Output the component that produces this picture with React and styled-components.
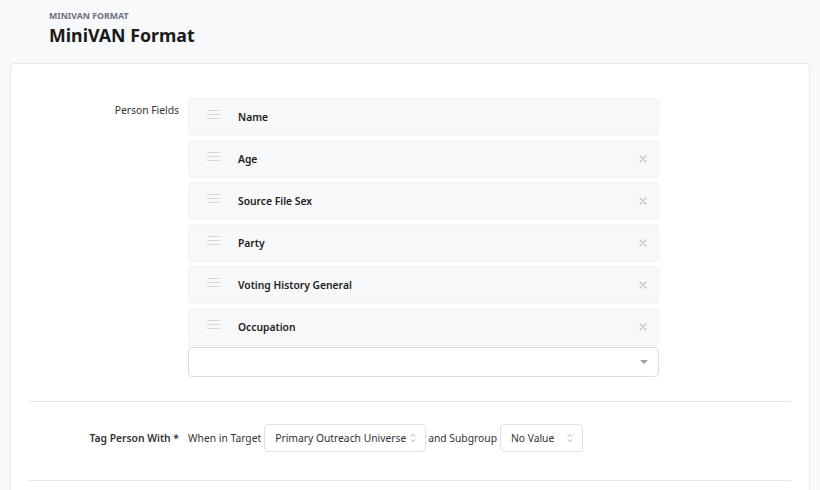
import React from 'react';
import styled, { createGlobalStyle } from 'styled-components';

const GlobalStyle = createGlobalStyle`
  body {
    margin: 0;
    background: #f8f9fa;
    font-family: "Noto Sans", "Open Sans", sans-serif;
    color: #222;
  }
`;

const Header = styled.header`
  padding: 10px 0 0 49px;
  height: 63px;
  box-sizing: border-box;
`;

const Eyebrow = styled.div`
  font-size: 8.8px;
  font-weight: 700;
  color: #6b7280;
  line-height: 12px;
`;

const Title = styled.h1`
  margin: 0;
  font-size: 17.8px;
  font-weight: 700;
  color: #1a1a1a;
  line-height: 26px;
`;

const Card = styled.section`
  margin: 0 10px;
  background: #fff;
  border: 1px solid #e6e8eb;
  border-bottom: none;
  border-radius: 4px 4px 0 0;
  padding: 34px 18px 0;
  min-height: 427px;
  box-sizing: border-box;
`;

const FormRow = styled.div`
  display: grid;
  grid-template-columns: 150px 1fr;
  column-gap: 9px;
  align-items: ${({ center }) => (center ? 'center' : 'start')};
  padding: ${({ center }) => (center ? '22px 0 28px' : '0 0 24px')};
  border-bottom: 1px solid #e3e5e8;
`;

const Label = styled.label`
  text-align: right;
  font-size: 10.3px;
  font-weight: ${({ bold }) => (bold ? 600 : 400)};
  color: #333;
  padding-top: ${({ bold }) => (bold ? '0' : '5px')};
`;

const FieldList = styled.div`
  width: 471px;
  display: flex;
  flex-direction: column;
  gap: 4px;
`;

const FieldItem = styled.div`
  height: 38px;
  box-sizing: border-box;
  background: #f7f8fa;
  border: 1px solid #f1f2f4;
  border-radius: 4px;
  display: flex;
  align-items: center;
  padding: 0 11px 0 18px;
`;

const Handle = styled.span`
  width: 13px;
  height: 7px;
  margin-top: -5px;
  border-top: 1px solid #d6d8dc;
  border-bottom: 1px solid #d6d8dc;
  position: relative;
  flex-shrink: 0;

  &::after {
    content: '';
    position: absolute;
    left: 0;
    right: 0;
    top: 3px;
    border-top: 1px solid #d6d8dc;
  }
`;

const FieldName = styled.span`
  margin-left: 18px;
  flex-grow: 1;
  font-size: 10.3px;
  font-weight: 600;
  color: #222;
`;

const Remove = styled.span`
  width: 8px;
  display: flex;
  justify-content: center;
`;

const AddSelect = styled.div`
  margin-top: -3px;
  height: 30px;
  box-sizing: border-box;
  background: #fff;
  border: 1px solid #d9dce0;
  border-radius: 4px;
  display: flex;
  align-items: center;
  justify-content: flex-end;
  padding-right: 10px;
`;

const Caret = styled.span`
  width: 0;
  height: 0;
  border-left: 4px solid transparent;
  border-right: 4px solid transparent;
  border-top: 4px solid #9a9da2;
`;

const Inline = styled.div`
  display: flex;
  align-items: center;
  gap: 2px;
  font-size: 10.3px;
  color: #333;
  white-space: nowrap;
`;

const Select = styled.div`
  height: 28px;
  width: ${({ w }) => w}px;
  box-sizing: border-box;
  border: 1px solid #dfe1e5;
  border-radius: 4px;
  display: flex;
  align-items: center;
  justify-content: space-between;
  padding: 0 9px 0 10px;
  font-size: 10.3px;
  color: #333;
  background: #fff;
`;

const Text = styled.span`
  margin-right: 1px;
`;

const Cross = () => (
  <svg width="8" height="8" viewBox="0 0 8 8">
    <path d="M1 1L7 7M7 1L1 7" stroke="#c2c4c8" strokeWidth="1.4" strokeLinecap="round" />
  </svg>
);

const Updown = () => (
  <svg width="6" height="10" viewBox="0 0 6 10">
    <path d="M1 3.5L3 1.5L5 3.5M1 6.5L3 8.5L5 6.5" fill="none" stroke="#9a9da2" strokeWidth="0.9" />
  </svg>
);

const fields = ['Name', 'Age', 'Source File Sex', 'Party', 'Voting History General', 'Occupation'];

export default function App() {
  return (
    <>
      <GlobalStyle />
      <Header>
        <Eyebrow>MINIVAN FORMAT</Eyebrow>
        <Title>MiniVAN Format</Title>
      </Header>
      <Card>
        <FormRow>
          <Label>Person Fields</Label>
          <FieldList>
            {fields.map((f, i) => (
              <FieldItem key={f}>
                <Handle />
                <FieldName>{f}</FieldName>
                <Remove>{i > 0 && <Cross />}</Remove>
              </FieldItem>
            ))}
            <AddSelect>
              <Caret />
            </AddSelect>
          </FieldList>
        </FormRow>
        <FormRow center>
          <Label bold>Tag Person With *</Label>
          <Inline>
            <Text>When in Target</Text>
            <Select w={162}>
              Primary Outreach Universe
              <Updown />
            </Select>
            <Text>and Subgroup</Text>
            <Select w={83}>
              No Value
              <Updown />
            </Select>
          </Inline>
        </FormRow>
      </Card>
    </>
  );
}
